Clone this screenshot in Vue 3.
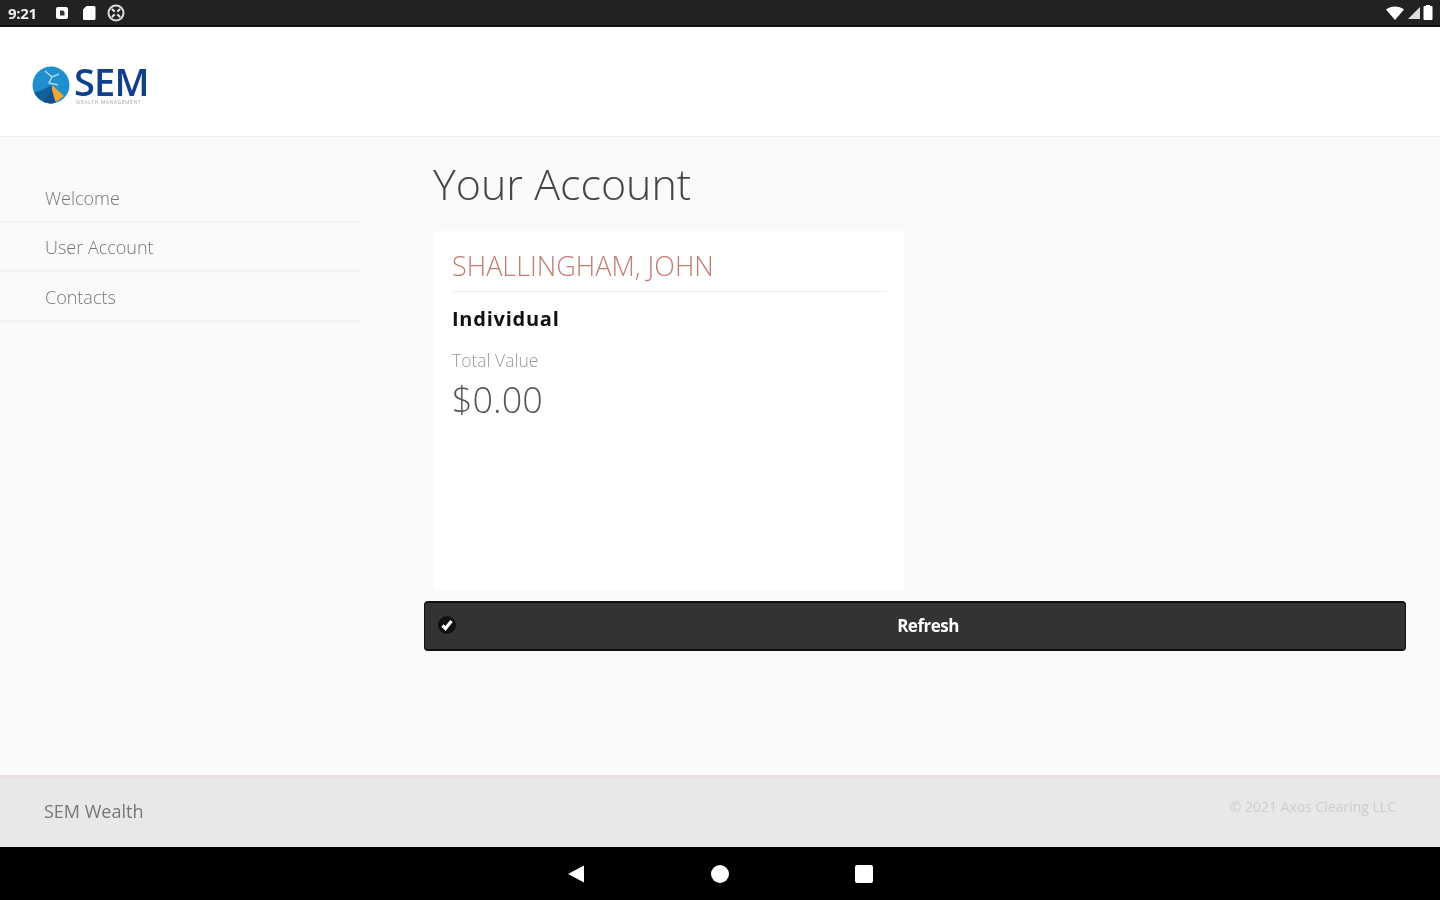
<template>
  <div class="screen">
    <div class="status-bar">
      <div class="status-left">
        <span class="clock">9:21</span>
        <svg class="note" width="14" height="14" viewBox="0 0 14 14">
          <rect x="1" y="1" width="12" height="12" rx="2" fill="#fff" />
          <path d="M5 4.5h3l1.500 1.500v3.500H5z" fill="#333" />
        </svg>
        <svg class="sd" width="14" height="16" viewBox="0 0 14 16">
          <path d="M4.500 1H12a1.500 1.500 0 0 1 1.500 1.500V13.500A1.500 1.500 0 0 1 12 15H2.500A1.500 1.500 0 0 1 1 13.500V4.500z" fill="#fff" />
        </svg>
        <svg class="sync" width="18" height="18" viewBox="0 0 18 18">
          <circle cx="9" cy="9" r="7.500" fill="none" stroke="#ddd" stroke-width="2" />
          <path d="M5 5l8 8M13 5l-8 8" stroke="#eee" stroke-width="2" />
          <circle cx="9" cy="9" r="2" fill="#222" />
        </svg>
      </div>
      <div class="status-right">
        <svg width="20" height="14" viewBox="0 0 20 14"><path d="M1 3.500C6 -0.500 14 -0.500 19 3.500L10 14z" fill="#fff" /></svg>
        <svg width="14" height="14" viewBox="0 0 14 14"><path d="M13 1v12H1z" fill="#ddd" /></svg>
        <svg width="10" height="15" viewBox="0 0 10 15"><path d="M3 1V0h4v1h1.500A1 1 0 0 1 9.500 2v12a1 1 0 0 1-1 1h-7a1 1 0 0 1-1-1V2a1 1 0 0 1 1-1z" fill="#fff" /></svg>
      </div>
    </div>

    <header class="top">
      <div class="logo">
        <svg width="38" height="38" viewBox="0 0 38 38">
          <defs>
            <clipPath id="globe"><circle cx="19" cy="19" r="18.500" /></clipPath>
          </defs>
          <g clip-path="url(#globe)">
            <rect width="38" height="38" fill="#1f8fcf" />
            <path d="M0 27L10 24L20 19L24 38H0z" fill="#14609f" />
            <path d="M20 19L32 30L24 36L20 30z" fill="#f2a72e" />
            <path d="M20 24L24 38H10z" fill="#124f8e" />
            <path d="M13 5L20 11L17 17L26 19M20 11L27 8" fill="none" stroke="#a9d6ee" stroke-width="1.500" />
          </g>
        </svg>
        <div class="logo-text">
          <span class="logo-name">SEM</span>
          <span class="logo-sub">WEALTH MANAGEMENT</span>
        </div>
      </div>
    </header>

    <div class="content">
      <nav class="side">
        <a v-for="item in menu" :key="item" class="side-item">{{ item }}</a>
      </nav>

      <main class="main">
        <h1>Your Account</h1>
        <section class="card">
          <h2>SHALLINGHAM, JOHN</h2>
          <h3>Individual</h3>
          <div class="label">Total Value</div>
          <div class="value">$0.00</div>
        </section>
        <button class="refresh" type="button">
          <span class="check">
            <svg width="14" height="14" viewBox="0 0 14 14">
              <path d="M2.500 7.500L5.500 10.500L11.500 3" fill="none" stroke="#fff" stroke-width="3.200" />
            </svg>
          </span>
          Refresh
        </button>
      </main>
    </div>

    <footer class="foot">
      <span class="foot-name">SEM Wealth</span>
      <span class="foot-copy">© 2021 Axos Clearing LLC</span>
    </footer>

    <div class="nav-bar">
      <svg width="20" height="20" viewBox="0 0 20 20"><path d="M18 1.500V18.500L2 10z" fill="#fff" /></svg>
      <svg width="20" height="20" viewBox="0 0 20 20"><circle cx="10" cy="10" r="9" fill="#fff" /></svg>
      <svg width="20" height="20" viewBox="0 0 20 20"><rect x="1" y="1" width="18" height="18" rx="2" fill="#fff" /></svg>
    </div>
  </div>
</template>

<script setup>
const menu = ['Welcome', 'User Account', 'Contacts']
</script>

<style>
html, body {
  margin: 0;
  background: #fafafa;
}
</style>

<style scoped>
.screen {
  display: flex;
  flex-direction: column;
  height: 900px;
  font-family: 'Open Sans', 'Liberation Sans', sans-serif;
  background: #fafafa;
  overflow: hidden;
  filter: blur(0.5px);
}

.status-bar {
  display: flex;
  justify-content: space-between;
  align-items: center;
  height: 27px;
  padding: 0 8px;
  background: #222;
  border-bottom: 2px solid #111;
  box-sizing: border-box;
}

.status-left {
  display: flex;
  align-items: center;
}

.clock {
  width: 47px;
  font-size: 15px;
  font-weight: 700;
  letter-spacing: -0.3px;
  color: #eee;
}

.sd {
  margin-left: 13px;
}

.sync {
  margin-left: 11px;
}

.status-right {
  display: flex;
  align-items: center;
  gap: 2px;
  margin-right: -1px;
}

.top {
  display: flex;
  align-items: center;
  height: 110px;
  padding: 6px 0 0 32px;
  background: #fff;
  border-bottom: 1px solid #eee;
  box-sizing: border-box;
}

.logo {
  display: flex;
  align-items: center;
  gap: 4px;
}

.logo-text {
  display: flex;
  flex-direction: column;
}

.logo-name {
  font-size: 38px;
  font-weight: 600;
  line-height: 32px;
  letter-spacing: -0.8px;
  color: #123f8c;
}

.logo-sub {
  margin: 2px 0 0 2px;
  font-size: 5px;
  line-height: 6px;
  letter-spacing: 0.55px;
  color: #aaa;
}

.content {
  display: flex;
  flex: 1;
  min-height: 0;
}

.side {
  width: 360px;
  padding-top: 36px;
}

.side-item {
  display: block;
  height: 49.500px;
  padding: 13.500px 0 0 45px;
  font-size: 18px;
  font-weight: 300;
  line-height: 22px;
  color: #777;
  border-bottom: 2px solid #f3f3f3;
  box-sizing: border-box;
}

.main {
  display: flex;
  flex-direction: column;
  flex: 1;
  padding: 0 34px 0 64px;
  align-items: flex-start;
}

h1 {
  margin: 21px 0 0 9px;
  font-size: 43px;
  font-weight: 300;
  line-height: 52px;
  color: #444;
}

.card {
  width: 470px;
  height: 359px;
  margin: 21px 0 11px 10px;
  padding: 16px 17px 0 18px;
  background: #fff;
  box-sizing: border-box;
}

h2 {
  margin: 0;
  height: 44px;
  font-size: 27px;
  font-weight: 300;
  line-height: 38px;
  color: #c27c72;
  border-bottom: 1px solid #eee;
}

h3 {
  margin: 13px 0 0;
  font-size: 20px;
  font-weight: 700;
  line-height: 28px;
  letter-spacing: 0.75px;
  color: #111;
}

.label {
  margin-top: 16px;
  font-size: 17.500px;
  font-weight: 300;
  line-height: 22px;
  color: #999;
}

.value {
  margin-top: 4px;
  font-size: 36px;
  font-weight: 300;
  line-height: 50px;
  color: #555;
}

.refresh {
  display: flex;
  align-items: center;
  justify-content: center;
  position: relative;
  width: 982px;
  height: 50px;
  padding: 0 0 2px 26px;
  font-family: inherit;
  font-size: 17px;
  font-weight: 700;
  letter-spacing: -0.5px;
  color: #fff;
  background: #333;
  border: 2px solid #111;
  border-width: 2px 1px;
  border-radius: 4px;
  box-sizing: border-box;
}

.check {
  position: absolute;
  left: 13px;
  top: 13px;
  display: flex;
  align-items: center;
  justify-content: center;
  width: 18px;
  height: 18px;
  background: #111;
  border-radius: 50%;
}

.foot {
  display: flex;
  justify-content: space-between;
  height: 72px;
  padding: 0 44px;
  background: #e8e8e8;
  border-top: 3px solid #ecdede;
  box-sizing: border-box;
}

.foot-name {
  margin-top: 20px;
  font-size: 18px;
  line-height: 26px;
  color: #777;
}

.foot-copy {
  margin-top: 19px;
  font-size: 14px;
  line-height: 20px;
  color: #ccc;
}

.nav-bar {
  display: flex;
  align-items: center;
  justify-content: center;
  gap: 124px;
  height: 53px;
  background: #000;
}
</style>
